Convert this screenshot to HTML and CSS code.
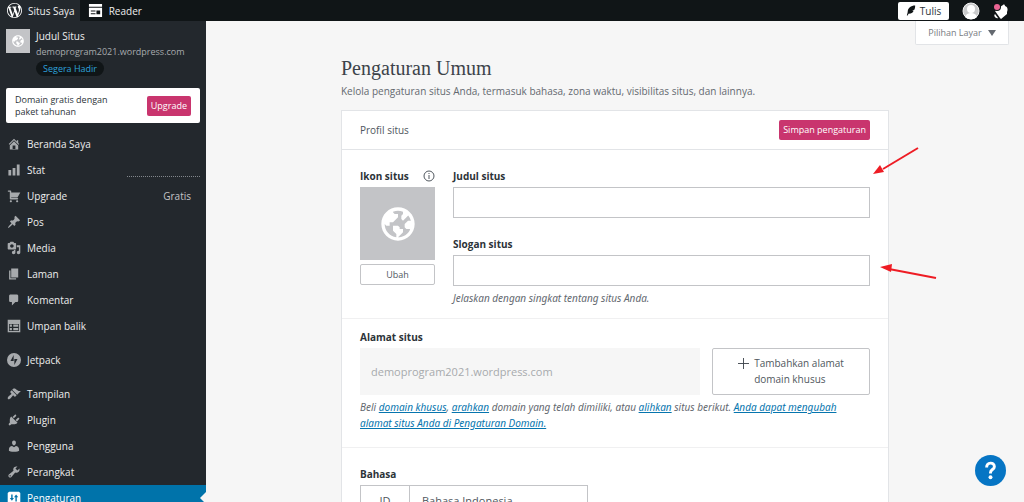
FILE: index.html
```html
<!DOCTYPE html>
<html lang="id">
<head>
<meta charset="utf-8">
<meta name="viewport" content="width=device-width, initial-scale=1">
<title>Pengaturan Umum</title>
<link rel="stylesheet" href="styles.css">
</head>
<body>
<svg class="defs" aria-hidden="true">
  <symbol id="globe" viewBox="0 0 24 24"><path d="M12 2C6.477 2 2 6.477 2 12s4.477 10 10 10 10-4.477 10-10S17.523 2 12 2zm0 18l2-2 1-1v-2h-2v-1l-1-1H9v3l2 2v1.931C7.06 19.436 4 16.072 4 12l1 1h2v-2h2l3-3V6h-2L9 5v-.411a7.945 7.945 0 0 1 6 0V6l-1 1v2l1 1 3.13-3.13A7.983 7.983 0 0 1 19.736 10H18l-2 2v2l1 1h2l.286.286C18.029 18.061 15.239 20 12 20z"/></symbol>
</svg>
<header class="topbar">
  <a class="top-link top-link-active" href="#">
    <svg class="top-icon" viewBox="0 0 20 20"><path d="M20 10c0-5.51-4.49-10-10-10C4.48 0 0 4.49 0 10c0 5.52 4.48 10 10 10 5.51 0 10-4.48 10-10zM7.78 15.37L4.37 6.22c.55-.02 1.17-.08 1.17-.08.5-.06.44-1.13-.06-1.11 0 0-1.45.11-2.37.11-.18 0-.37 0-.58-.01C4.12 2.69 6.87 1.11 10 1.11c2.33 0 4.45.87 6.05 2.34-.68-.11-1.65.39-1.65 1.58 0 .74.45 1.36.9 2.1.35.61.55 1.36.55 2.46 0 1.49-1.4 5-1.4 5l-3.03-8.37c.54-.02.82-.17.82-.17.5-.05.44-1.25-.06-1.22 0 0-1.44.12-2.38.12-.87 0-2.33-.12-2.33-.12-.5-.03-.56 1.2-.06 1.22l.92.08 1.26 3.41zM17.41 10c.24-.64.74-1.87.43-4.25.7 1.29 1.05 2.71 1.05 4.25 0 3.29-1.73 6.24-4.4 7.78.97-2.59 1.94-5.2 2.92-7.78zM6.1 18.09C3.12 16.65 1.11 13.53 1.11 10c0-1.3.23-2.48.72-3.59C3.25 10.3 4.67 14.2 6.1 18.09zm4.03-6.63l2.58 6.98c-.86.29-1.76.45-2.71.45-.79 0-1.57-.11-2.29-.33.81-2.38 1.62-4.74 2.42-7.1z"/></svg>
    Situs Saya
  </a>
  <a class="top-link" href="#">
    <svg class="top-icon" viewBox="0 0 16 16"><path fill-rule="evenodd" d="M1 1h14v3H1zM1 5h14v10H1zM3 8v1h5V8zm0 3v1h5v-1zm6-3v4h4V8z"/></svg>
    Reader
  </a>
  <div class="top-right">
    <button class="write" type="button">
      <svg class="write-icon" viewBox="0 0 12 12"><path d="M11 0C6 0 2 3 2 8l-1 4h1l1-2c4 0 6-2 6-4H7l3-1c1-2 1-4 1-5z"/></svg>
      Tulis
    </button>
    <button class="avatar" type="button" aria-label="Profil">
      <svg viewBox="0 0 18 18"><circle cx="9" cy="9" r="8" fill="#c9cacb" stroke="#f2f2f2" stroke-width="1"/><circle cx="9" cy="7" r="4" fill="#fff"/><path d="M3 15c1-3 3-4 6-4s5 1 6 4c-3 3-9 3-12 0z" fill="#fff"/></svg>
    </button>
    <button class="bell" type="button" aria-label="Notifikasi">
      <svg viewBox="0 0 18 18"><path fill="#fff" d="M8 5l3-2c1-1 2 0 2 1 3 1 3 4 2 6v2l-6 5-1-1-5-7 1-1c2 0 3-1 4-3z"/><path fill="#fff" d="M3 12l3 4c-2 1-5-2-3-4z"/><circle cx="5" cy="5" r="4" fill="#101517"/><circle cx="5" cy="5" r="3" fill="#eb6594"/></svg>
    </button>
  </div>
</header>
<div class="shell">
  <nav class="sidebar" aria-label="Menu situs">
    <div class="site">
      <span class="site-icon"><svg viewBox="0 0 24 24"><use href="#globe"/></svg></span>
      <div class="site-info">
        <div class="site-name">Judul Situs</div>
        <div class="site-url">demoprogram2021.wordpress.com</div>
        <span class="badge">Segera Hadir</span>
      </div>
    </div>
    <div class="promo">
      <span class="promo-text">Domain gratis dengan paket tahunan</span>
      <button class="pink" type="button">Upgrade</button>
    </div>
    <ul class="menu">
      <li><a href="#"><svg viewBox="0 0 20 20"><path d="M16 8.5l1.53 1.53-1.06 1.06L10 4.6l-6.47 6.49-1.06-1.06L10 2.5l4 4v-2h2v4zm-6-2.46l6 5.99V18H4v-5.97zM12 17v-5H8v5h4z"/></svg>Beranda Saya</a></li>
      <li><a href="#"><svg viewBox="0 0 20 20"><path d="M18 18V2h-4v16h4zm-6 0V7H8v11h4zm-6 0v-8H2v8h4z"/></svg>Stat<span class="spark"></span></a></li>
      <li><a href="#"><svg viewBox="0 0 20 20"><path d="M6 13h9c.55 0 1 .45 1 1s-.45 1-1 1H5c-.55 0-1-.45-1-1V4H2c-.55 0-1-.45-1-1s.45-1 1-1h3c.55 0 1 .45 1 1v2h13l-4 7H6v1zm-.5 3c.83 0 1.5.67 1.5 1.5S6.33 19 5.5 19 4 18.33 4 17.5 4.67 16 5.5 16zm9 0c.83 0 1.5.67 1.5 1.5s-.67 1.5-1.5 1.5-1.5-.67-1.5-1.5.67-1.5 1.5-1.5z"/></svg>Upgrade<span class="plan">Gratis</span></a></li>
      <li><a href="#"><svg viewBox="0 0 20 20"><path d="M10.44 3.02l1.82-1.82 6.36 6.35-1.83 1.82c-1.05-.68-2.48-.57-3.41.36l-.75.75c-.92.93-1.04 2.35-.35 3.41l-1.83 1.82-2.41-2.41-2.8 2.79c-.42.42-3.38 2.71-3.8 2.29s1.86-3.39 2.28-3.81l2.79-2.79L4.1 9.36l1.83-1.82c1.05.69 2.48.57 3.4-.36l.75-.75c.93-.92 1.05-2.35.36-3.41z"/></svg>Pos</a></li>
      <li><a href="#"><svg viewBox="0 0 20 20"><path d="M13 11V4c0-.55-.45-1-1-1h-1.67L9 1H5L3.67 3H2c-.55 0-1 .45-1 1v7c0 .55.45 1 1 1h10c.55 0 1-.45 1-1zM7 4.5c1.38 0 2.5 1.12 2.5 2.5S8.38 9.5 7 9.5 4.5 8.38 4.5 7 5.62 4.5 7 4.5zM14 6h5v10.5c0 1.38-1.12 2.5-2.5 2.5S14 17.88 14 16.5s1.12-2.5 2.5-2.5c.17 0 .34.02.5.05V9h-3V6zm-4 8.05V13h2v3.5c0 1.38-1.12 2.5-2.5 2.5S7 17.88 7 16.5 8.12 14 9.5 14c.17 0 .34.02.5.05z"/></svg>Media</a></li>
      <li><a href="#"><svg viewBox="0 0 20 20"><path d="M6 15V2h10v13H6zm-1 1h8v2H3V5h2v11z"/></svg>Laman</a></li>
      <li><a href="#"><svg viewBox="0 0 20 20"><path d="M5 2h9c1.1 0 2 .9 2 2v7c0 1.1-.9 2-2 2h-2l-5 5v-5H5c-1.1 0-2-.9-2-2V4c0-1.1.9-2 2-2z"/></svg>Komentar</a></li>
      <li><a href="#"><svg viewBox="0 0 20 20"><path fill-rule="evenodd" d="M1 1h18v18H1zM3 7v10h14V7z"/><path d="M4 8h3v3H4zm5 0h7v3H9zm-5 5h3v3H4zm5 0h7v3H9z"/></svg>Umpan balik</a></li>
      <li class="group"><a href="#"><svg viewBox="0 0 20 20"><path fill-rule="evenodd" d="M10 0a10 10 0 1 0 0 20 10 10 0 0 0 0-20zM9.5 3v8.500H5zM10.500 17V8.500H15z"/></svg>Jetpack</a></li>
      <li class="group"><a href="#"><svg viewBox="0 0 20 20"><path d="M14.480 11.060L7.410 3.990l1.500-1.500c.5-.56 2.300-.47 3.510.32 1.210.8 1.430 1.280 2.910 2.100 1.180.64 2.450 1.260 4.450.85zm-.71.71L6.700 4.700 4.930 6.470c-.39.39-.39 1.020 0 1.410l1.060 1.060c.39.39.39 1.030 0 1.420-.6.6-1.430 1.110-2.210 1.690-.35.26-.7.53-1.010.84C1.430 14.230.4 16.080 1.400 17.070c.99 1 2.840-.03 4.180-1.360.31-.31.58-.66.85-1.020.57-.78 1.080-1.610 1.690-2.210.39-.39 1.020-.39 1.410 0l1.060 1.060c.39.39 1.020.39 1.410 0z"/></svg>Tampilan</a></li>
      <li><a href="#"><svg viewBox="0 0 20 20"><path d="M13.110 4.360L9.870 7.600 8 5.730l3.240-3.240c.35-.34 1.050-.2 1.560.32.52.51.66 1.210.31 1.550zm-8 1.770l.91-1.120 9.010 9.010-1.190.84c-.71.71-2.630 1.160-3.820 1.160H6.140L4.900 17.260c-.59.59-1.540.59-2.120 0-.59-.58-.59-1.530 0-2.120l1.240-1.240v-3.880c0-1.130.4-3.190 1.090-3.890zm7.260 3.970l3.240-3.240c.34-.35 1.040-.21 1.550.31.52.51.66 1.210.31 1.550l-3.240 3.250z"/></svg>Plugin</a></li>
      <li><a href="#"><svg viewBox="0 0 20 20"><path d="M10 9.250c-2.270 0-2.730-3.440-2.730-3.440C7 4.020 7.820 2 9.970 2c2.160 0 2.980 2.020 2.710 3.810 0 0-.41 3.440-2.680 3.440zm0 2.570L12.720 10c2.390 0 4.520 2.330 4.520 4.530v2.490s-3.650 1.130-7.240 1.130c-3.650 0-7.240-1.130-7.240-1.130v-2.490c0-2.250 1.940-4.480 4.470-4.480z"/></svg>Pengguna</a></li>
      <li><a href="#"><svg viewBox="0 0 20 20"><path d="M16.680 9.770c-1.340 1.340-3.300 1.670-4.950.99l-5.410 6.520c-.99.99-2.590.99-3.580 0s-.99-2.590 0-3.570l6.520-5.420c-.68-1.650-.35-3.610.99-4.950 1.280-1.280 3.120-1.620 4.720-1.060l-2.890 2.890 2.820 2.820 2.860-2.870c.53 1.580.18 3.390-1.080 4.650zM3.810 16.210c.4.39 1.040.39 1.430 0 .4-.4.4-1.040 0-1.430-.39-.4-1.030-.4-1.430 0-.39.39-.39 1.030 0 1.430z"/></svg>Perangkat</a></li>
      <li><a class="current" aria-current="page" href="#"><svg viewBox="0 0 20 20"><path fill-rule="evenodd" d="M3 1h14l2 2v14l-2 2H3l-2-2V3zM6 5v5H4l3 4 3-4H8V5zm7 0l-3 4h2v6h2V9h2z"/></svg>Pengaturan</a></li>
    </ul>
  </nav>
  <main class="main">
    <button class="screen-options" type="button">Pilihan Layar<svg viewBox="0 0 8 8"><path d="M0 1h8L4 7z"/></svg></button>
    <div class="content">
      <h1>Pengaturan Umum</h1>
      <p class="lead">Kelola pengaturan situs Anda, termasuk bahasa, zona waktu, visibilitas situs, dan lainnya.</p>
      <form class="card">
        <div class="card-head">
          <h2>Profil situs</h2>
          <button class="pink" type="button">Simpan pengaturan</button>
        </div>
        <section class="profile">
          <div class="icon-col">
            <div class="label icon-label">Ikon situs
              <svg viewBox="0 0 12 12"><circle cx="6" cy="6" r="5" fill="none" stroke="#50575e"/><path d="M5.500 5h1v4h-1zm0-2h1v1h-1z" fill="#50575e"/></svg>
            </div>
            <div class="icon-box"><svg viewBox="0 0 24 24"><use href="#globe"/></svg></div>
            <button class="outline small" type="button">Ubah</button>
          </div>
          <div class="fields">
            <label class="label" for="title">Judul situs</label>
            <input class="text" id="title" type="text">
            <label class="label slogan" for="slogan">Slogan situs</label>
            <input class="text" id="slogan" type="text">
            <p class="help">Jelaskan dengan singkat tentang situs Anda.</p>
          </div>
        </section>
        <section class="address">
          <label class="label" for="address">Alamat situs</label>
          <div class="address-row">
            <input class="domain" id="address" type="text" value="demoprogram2021.wordpress.com" disabled>
            <button class="outline add" type="button"><svg viewBox="0 0 12 12"><path d="M6 0v12M0 6h12" stroke="#3c434a"/></svg><span>Tambahkan alamat<br>domain khusus</span></button>
          </div>
          <p class="help">Beli <a href="#">domain khusus</a>, <a href="#">arahkan</a> domain yang telah dimiliki, atau <a href="#">alihkan</a> situs berikut. <a href="#">Anda dapat mengubah alamat situs Anda di Pengaturan Domain.</a></p>
        </section>
        <section class="language">
          <div class="label" id="lang">Bahasa</div>
          <button class="picker" type="button" aria-labelledby="lang"><span class="code">ID</span><span class="lang-name">Bahasa Indonesia</span></button>
        </section>
      </form>
    </div>
    <svg class="arrows" viewBox="0 0 70 140" aria-hidden="true"><g fill="#ee1c24" stroke="#ee1c24"><path d="M45 6L10 27" stroke-width="2"/><path d="M0 32l7-9 4 7z" stroke="none"/><path d="M63 136L16 127" stroke-width="2"/><path d="M7 125l12-3-1 8z" stroke="none"/></g></svg>
    <button class="help-button" type="button" aria-label="Bantuan"><svg viewBox="0 0 32 32"><path d="M12 13c0-6 8-6 8-1 0 3-4 3-4 6v1" fill="none" stroke="#fff" stroke-width="3"/><circle cx="16" cy="23" r="2" fill="#fff"/></svg></button>
  </main>
</div>
</body>
</html>
```
FILE: styles.css
```css
* { box-sizing: border-box; }
body {
  margin: 0;
  height: 100vh;
  overflow: hidden;
  display: flex;
  flex-direction: column;
  background: #f6f6f6;
  color: #50575e;
  font: 10px/16px "Open Sans", "Noto Sans", sans-serif;
}
button, input { font: inherit; color: inherit; margin: 0; }
button { padding: 0; border: 0; background: none; }
svg { display: block; flex: none; }
.defs { position: absolute; width: 0; height: 0; }

.topbar { display: flex; height: 21px; flex: none; background: #101517; color: #fff; }
.top-link {
  display: flex; align-items: center; gap: 6px;
  padding: 0 8px; color: #eee; text-decoration: none;
}
.top-link-active { padding: 0 5px 0 7px; background: #23282d; }
.top-icon { width: 15px; height: 15px; fill: #fff; }
.top-right { display: flex; align-items: center; margin-left: auto; padding-right: 14px; }
.write {
  display: flex; align-items: center; justify-content: center; gap: 4px;
  width: 51px; height: 18px; margin-right: 13px;
  border-radius: 2px; background: #fff; color: #2c3338;
}
.write-icon { width: 10px; height: 11px; fill: #101517; }
.avatar { width: 18px; height: 18px; margin-right: 12px; }
.bell { width: 18px; height: 18px; }

.shell { display: flex; flex: 1; min-height: 0; }
.sidebar { width: 206px; flex: none; overflow: hidden; background: #23282d; color: #eee; }
.site { display: flex; gap: 6px; padding: 8px 6px 0; }
.site-icon { display: grid; place-items: center; width: 24px; height: 24px; background: #c3c4c7; }
.site-icon svg { width: 14px; height: 14px; fill: #fff; }
.site-info { min-width: 0; }
.site-name { line-height: 15px; }
.site-url { font-size: 9px; line-height: 15px; color: #a7aaad; }
.badge {
  display: inline-block; padding: 0 7px; margin-top: 2px;
  border-radius: 8px; background: #101517; color: #2ea2dc;
  font-size: 9px; line-height: 15px;
}
.promo {
  display: flex; align-items: center; justify-content: space-between;
  height: 35px; margin: 12px 6px 8px; padding: 0 9px;
  border-radius: 2px; background: #fff; color: #2c3338;
}
.promo-text { width: 100px; font-size: 9px; line-height: 12px; }
.pink { height: 20px; padding: 0 4px; border-radius: 2px; background: #c9356e; color: #fff; font-size: 9px; }
.menu { margin: 0; padding: 0; list-style: none; }
.menu a {
  display: flex; align-items: center; gap: 6px;
  height: 26px; padding: 0 6px 0 7px; color: #eee; text-decoration: none;
}
.menu svg { width: 14px; height: 14px; fill: #a7aaad; }
.group { margin-top: 8px; }
.spark { width: 73px; margin: 13px 0 0 auto; border-top: 1px dotted #82878c; }
.plan { margin-left: auto; padding-right: 9px; color: #c3c4c7; }
.menu .current { position: relative; background: #0073aa; color: #fff; }
.menu .current svg { fill: #fff; }
.current::after {
  content: ""; position: absolute; right: 0; top: 7px;
  border: 6px solid transparent; border-left: 0; border-right-color: #f6f6f6;
}

.main { position: relative; flex: 1; min-width: 0; overflow: hidden; }
.screen-options {
  display: flex; align-items: center; justify-content: center; gap: 6px;
  width: 94px; height: 24px; margin: 0 15px 0 auto;
  border: 1px solid #e2e4e7; border-top: 0; border-radius: 0 0 2px 2px;
  background: #fff; color: #787c82; font-size: 9px;
}
.screen-options svg { width: 8px; height: 8px; fill: #646970; }
.content { max-width: 548px; margin: 0 auto; padding-top: 11px; }
h1 { margin: 0; color: #3c434a; font: 20px/24px "Liberation Serif", serif; }
.lead { margin: 3px 0 11px; color: #646970; }
.card { border: 1px solid #e2e4e7; background: #fff; }
.card-head {
  display: flex; align-items: center; justify-content: space-between;
  height: 39px; padding: 0 18px; border-bottom: 1px solid #e2e4e7;
}
h2 { margin: 0; font-size: 10px; font-weight: 400; }
.profile { display: flex; gap: 18px; padding: 18px 18px 12px; border-bottom: 1px solid #f0f0f1; }
.icon-col { width: 75px; flex: none; }
.label { display: block; margin-bottom: 3px; color: #2c3338; font-weight: 700; }
.icon-label { display: flex; align-items: center; justify-content: space-between; }
.icon-label svg { width: 12px; height: 12px; }
.icon-box { display: grid; place-items: center; height: 73px; margin-bottom: 4px; background: #c3c4c7; }
.icon-box svg { width: 40px; height: 40px; fill: #fff; }
.outline { border: 1px solid #c3c4c7; border-radius: 2px; background: #fff; }
.small { width: 100%; height: 21px; font-size: 9px; }
.fields { flex: 1; }
.text { display: block; width: 100%; height: 31px; border: 1px solid #c3c4c7; background: #fff; }
.slogan { margin-top: 18px; }
.help { margin: 4px 0 0; color: #646970; font-family: "Noto Sans", sans-serif; font-style: italic; }
.help a { color: #0675ae; }
.address { padding: 10px 18px 16px; border-bottom: 1px solid #f0f0f1; }
.address-row { display: flex; gap: 12px; }
.domain { flex: 1; min-width: 0; height: 47px; padding: 0 11px; border: 0; background: #f6f6f6; color: #a7aaad; font-size: 11px; }
.add { display: flex; justify-content: center; gap: 5px; width: 158px; padding: 6px 0; text-align: left; }
.add svg { width: 11px; height: 11px; margin-top: 3px; }
.language { padding: 18px 18px 40px; }
.picker { display: flex; width: 228px; height: 31px; border: 1px solid #c3c4c7; font-size: 11px; line-height: 29px; }
.code { width: 49px; border-right: 1px solid #c3c4c7; }
.lang-name { padding-left: 12px; }
.arrows { position: absolute; left: calc(50% + 258px); top: 121px; width: 70px; height: 140px; }
.help-button { position: absolute; right: 18px; bottom: 16px; width: 31px; height: 31px; border-radius: 50%; background: #0675c4; }
```
